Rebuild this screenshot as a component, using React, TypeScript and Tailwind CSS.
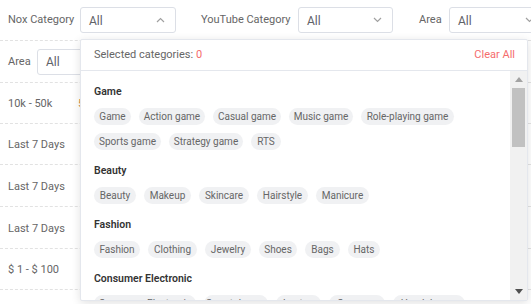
import React from "react";

function Chevron({ up }: { up?: boolean }) {
  return (
    <svg width="9" height="6" viewBox="0 0 9 6" className="shrink-0">
      {up ? (
        <polyline points="1,5 4.5,1.5 8,5" fill="none" stroke="#a0a0a0" strokeWidth="1.2" />
      ) : (
        <polyline points="1,1 4.5,4.5 8,1" fill="none" stroke="#a0a0a0" strokeWidth="1.2" />
      )}
    </svg>
  );
}

function Select({ w, up }: { w: string; up?: boolean }) {
  return (
    <div
      className={`${w} h-[26px] shrink-0 flex items-center justify-between pl-2 pr-[10px] border border-[#dcdfe6] rounded-[3px] bg-white text-[12px] text-[#606266]`}
    >
      <span className="pt-[1px]">All</span>
      <Chevron up={up} />
    </div>
  );
}

type Chip = [string, string];

const sections: { title: string; rows: Chip[][] }[] = [
  {
    title: "Game",
    rows: [
      [
        ["Game", "w-[37px]"],
        ["Action game", "w-[66px]"],
        ["Casual game", "w-[68px]"],
        ["Music game", "w-[64px]"],
        ["Role-playing game", "w-[93px]"],
      ],
      [
        ["Sports game", "w-[67px]"],
        ["Strategy game", "w-[74px]"],
        ["RTS", "w-[30px]"],
      ],
    ],
  },
  {
    title: "Beauty",
    rows: [
      [
        ["Beauty", "w-[42px]"],
        ["Makeup", "w-[47px]"],
        ["Skincare", "w-[50px]"],
        ["Hairstyle", "w-[51px]"],
        ["Manicure", "w-[53px]"],
      ],
    ],
  },
  {
    title: "Fashion",
    rows: [
      [
        ["Fashion", "w-[46px]"],
        ["Clothing", "w-[49px]"],
        ["Jewelry", "w-[46px]"],
        ["Shoes", "w-[38px]"],
        ["Bags", "w-[35px]"],
        ["Hats", "w-[32px]"],
      ],
    ],
  },
  {
    title: "Consumer Electronic",
    rows: [
      [
        ["Consumer Electronic", "w-[102px]"],
        ["Smartphones", "w-[64px]"],
        ["Laptop", "w-[45px]"],
        ["Cameras", "w-[56px]"],
        ["Headphones", "w-[72px]"],
      ],
    ],
  },
];

function DataRow({ h, text, extra }: { h: string; text: string; extra?: React.ReactNode }) {
  return (
    <div className={`${h} flex items-center pt-[3px] border-b border-dashed border-[#e2e2e2]`}>
      <span className="w-[78px] pl-2 shrink-0">{text}</span>
      {extra}
    </div>
  );
}

export default function App() {
  return (
    <div className="relative w-[531px] h-[304px] overflow-hidden bg-white font-[family-name:Roboto,sans-serif] text-[11px] text-[#666]">
      {/* Filter row */}
      <div className="h-[41px] flex items-center border-b border-dashed border-[#e2e2e2]">
        <span className="w-[80px] pl-2 pt-[1px] shrink-0">Nox Category</span>
        <Select w="w-[96px]" up />
        <span className="w-[97px] ml-[25px] pt-[1px] shrink-0">YouTube Category</span>
        <Select w="w-[95px]" />
        <span className="w-[30px] ml-[26px] pt-[1px] shrink-0">Area</span>
        <Select w="w-[96px]" />
      </div>
      {/* Area row */}
      <div className="h-[42px] flex items-center border-b border-dashed border-[#e2e2e2]">
        <span className="w-[37px] pl-2 pt-[1px] shrink-0">Area</span>
        <Select w="w-[96px]" />
      </div>
      <DataRow h="h-[41px]" text="10k - 50k" extra={<span className="text-[#d08a3e]">5k - 10k</span>} />
      <DataRow h="h-[41px]" text="Last 7 Days" />
      <DataRow h="h-[42px]" text="Last 7 Days" />
      <DataRow h="h-[42px]" text="Last 7 Days" />
      <DataRow h="h-[41px]" text="$ 1 - $ 100" />
      <div className="h-[20px]" />

      {/* Dropdown panel */}
      <div className="absolute left-[80px] top-[39px] w-[448px] h-[262px] flex flex-col bg-white border border-[#e4e7ed] rounded-[2px] shadow-[0_2px_10px_0_rgba(0,0,0,0.12)]">
        <div className="h-[31px] shrink-0 flex items-center justify-between pl-[13px] pr-[12px] pt-[1px] border-b border-[#e4e7ed]">
          <span>
            Selected categories: <span className="text-[#f56c6c]">0</span>
          </span>
          <span className="text-[#f56c6c]">Clear All</span>
        </div>
        <div className="flex-1 flex min-h-0">
          <div className="flex-1 overflow-hidden pl-[13px] pt-[13px]">
            {sections.map((s) => (
              <div key={s.title} className="mb-[13px]">
                <div className="h-[16px] leading-[16px] mb-[8px] text-[10.5px] font-semibold text-[#333]">
                  {s.title}
                </div>
                <div className="flex flex-col gap-[8px]">
                  {s.rows.map((r, i) => (
                    <div key={i} className="flex gap-[8px]">
                      {r.map(([t, w]) => (
                        <span
                          key={t}
                          className={`${w} h-[17px] shrink-0 flex items-center justify-center whitespace-nowrap rounded-full bg-[#f0f1f3] text-[10px] text-[#666]`}
                        >
                          {t}
                        </span>
                      ))}
                    </div>
                  ))}
                </div>
              </div>
            ))}
          </div>
          {/* fake scrollbar */}
          <div className="w-[17px] shrink-0 bg-[#f1f1f1] flex flex-col items-center">
            <div className="h-[17px] w-full flex items-center justify-center">
              <svg width="8" height="5" viewBox="0 0 8 5">
                <polygon points="0,5 4,0 8,5" fill="#a3a3a3" />
              </svg>
            </div>
            <div className="w-[13px] h-[59px] bg-[#c1c1c1]" />
            <div className="flex-1" />
            <div className="h-[17px] w-full flex items-center justify-center">
              <svg width="8" height="5" viewBox="0 0 8 5">
                <polygon points="0,0 8,0 4,5" fill="#505050" />
              </svg>
            </div>
          </div>
        </div>
      </div>
    </div>
  );
}
